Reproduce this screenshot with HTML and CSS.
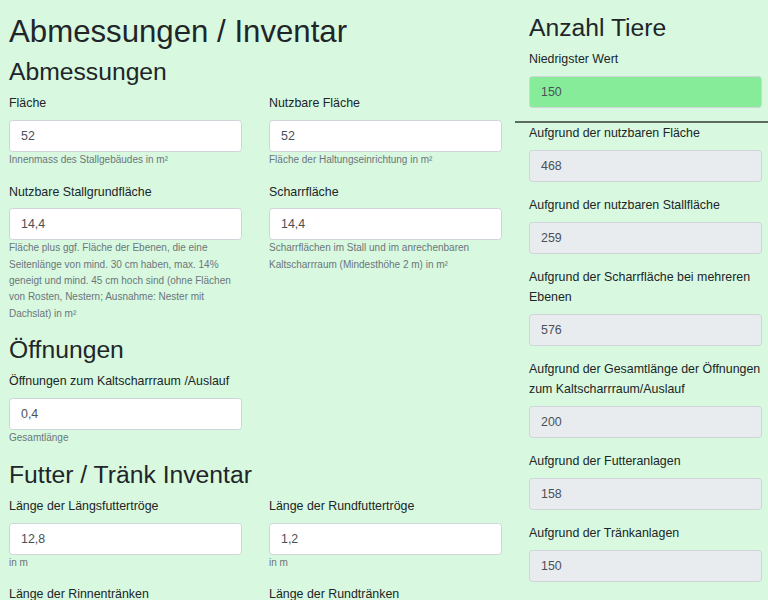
FILE: index.html
```html
<!DOCTYPE html>
<html lang="de">
<head>
    <meta charset="UTF-8">
    <meta name="viewport" content="width=device-width, initial-scale=1.0">
    <title>Tierbesatz Rechner</title>
    <link rel="stylesheet" href="styles.css">
</head>
<body>
    <div class="page">
        <div class="main">
            <h1>Abmessungen / Inventar</h1>

            <h3>Abmessungen</h3>
            <div class="row">
                <div class="form-group">
                    <label for="flaeche">Fläche</label>
                    <input id="flaeche" class="form-control" type="text" value="52">
                    <small class="form-text">Innenmass des Stallgebäudes in m²</small>
                </div>
                <div class="form-group">
                    <label for="nutzflaeche">Nutzbare Fläche</label>
                    <input id="nutzflaeche" class="form-control" type="text" value="52">
                    <small class="form-text">Fläche der Haltungseinrichtung in m²</small>
                </div>
                <div class="form-group">
                    <label for="stallgrund">Nutzbare Stallgrundfläche</label>
                    <input id="stallgrund" class="form-control" type="text" value="14,4">
                    <small class="form-text">Fläche plus ggf. Fläche der Ebenen, die eine Seitenlänge von mind. 30 cm haben, max. 14% geneigt und mind. 45 cm hoch sind (ohne Flächen von Rosten, Nestern; Ausnahme: Nester mit Dachslat) in m²</small>
                </div>
                <div class="form-group">
                    <label for="scharr">Scharrfläche</label>
                    <input id="scharr" class="form-control" type="text" value="14,4">
                    <small class="form-text">Scharrflächen im Stall und im anrechenbaren Kaltscharrraum (Mindesthöhe 2 m) in m²</small>
                </div>
            </div>

            <h3>Öffnungen</h3>
            <div class="row">
                <div class="form-group">
                    <label for="oeffnungen">Öffnungen zum Kaltscharrraum /Auslauf</label>
                    <input id="oeffnungen" class="form-control" type="text" value="0,4">
                    <small class="form-text">Gesamtlänge</small>
                </div>
            </div>

            <h3>Futter / Tränk Inventar</h3>
            <div class="row">
                <div class="form-group">
                    <label for="laengstroege">Länge der Längsfuttertröge</label>
                    <input id="laengstroege" class="form-control" type="text" value="12,8">
                    <small class="form-text">in m</small>
                </div>
                <div class="form-group">
                    <label for="rundtroege">Länge der Rundfuttertröge</label>
                    <input id="rundtroege" class="form-control" type="text" value="1,2">
                    <small class="form-text">in m</small>
                </div>
                <div class="form-group">
                    <label for="rinnen">Länge der Rinnentränken</label>
                    <input id="rinnen" class="form-control" type="text" value="0">
                    <small class="form-text">in m</small>
                </div>
                <div class="form-group">
                    <label for="rundtraenken">Länge der Rundtränken</label>
                    <input id="rundtraenken" class="form-control" type="text" value="0">
                    <small class="form-text">in m</small>
                </div>
            </div>
        </div>

        <div class="result">
            <div class="result-body">
                <h3>Anzahl Tiere</h3>
                <div class="form-group">
                    <label for="min">Niedrigster Wert</label>
                    <input id="min" class="form-control best" type="text" value="150" readonly>
                </div>
            </div>
            <hr>
            <div class="result-body">
                <div class="form-group">
                    <label>Aufgrund der nutzbaren Fläche</label>
                    <input class="form-control" type="text" value="468" readonly>
                </div>
                <div class="form-group">
                    <label>Aufgrund der nutzbaren Stallfläche</label>
                    <input class="form-control" type="text" value="259" readonly>
                </div>
                <div class="form-group">
                    <label>Aufgrund der Scharrfläche bei mehreren Ebenen</label>
                    <input class="form-control" type="text" value="576" readonly>
                </div>
                <div class="form-group">
                    <label>Aufgrund der Gesamtlänge der Öffnungen zum Kaltscharrraum/Auslauf</label>
                    <input class="form-control" type="text" value="200" readonly>
                </div>
                <div class="form-group">
                    <label>Aufgrund der Futteranlagen</label>
                    <input class="form-control" type="text" value="158" readonly>
                </div>
                <div class="form-group">
                    <label>Aufgrund der Tränkanlagen</label>
                    <input class="form-control" type="text" value="150" readonly>
                </div>
            </div>
        </div>
    </div>
</body>
</html>
```

FILE: styles.css
```css
body {
    margin: 0;
    font-family: "Liberation Sans", Arial, sans-serif;
    font-size: 12.4px;
    line-height: 20px;
    color: #212529;
    background: #d8f9df;
}
.page {
    display: flex;
    padding-top: 13px;
}
.main {
    width: 506px;
    padding-left: 9px;
    flex-shrink: 0;
}
.result {
    flex: 1;
}
.result-body {
    padding: 0 6px 0 14px;
}
h1, h3 {
    margin: 0 0 6.67px;
    font-weight: 400;
    line-height: 1.2;
}
h1 {
    font-size: 31.2px;
}
h3 {
    font-size: 24.7px;
}
.row {
    display: grid;
    grid-template-columns: 233px 233px;
    column-gap: 27px;
}
.form-group {
    margin-bottom: 13.33px;
}
label {
    display: inline-block;
    margin-bottom: 6.67px;
}
.form-control {
    display: block;
    box-sizing: border-box;
    width: 100%;
    height: 32px;
    padding: 5px 11px;
    font-family: inherit;
    font-size: 12.4px;
    line-height: 20px;
    color: #495057;
    background: #fff;
    border: 1px solid #ced4da;
    border-radius: 3.5px;
}
.form-control[readonly] {
    background: #e9ecef;
}
.form-control.best {
    background: #86ec9a;
}
.form-text {
    display: block;
    margin-top: 0;
    font-size: 10px;
    line-height: 16.3px;
    color: #6c757d;
}
hr {
    margin: 0;
    border: 0;
    border-top: 2px solid #5d6b60;
}
```
